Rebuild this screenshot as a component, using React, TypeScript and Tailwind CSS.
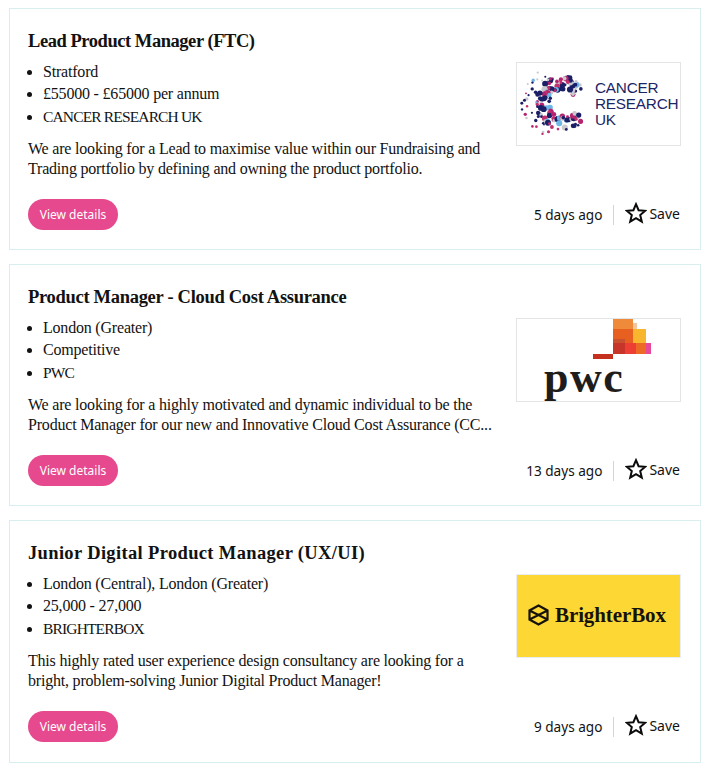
import React from "react";

const serif = "font-['Liberation_Serif',serif]";
const sans = "font-['Noto_Sans',sans-serif]";

function CrukLogo() {
  const colors = ["#1b1f66", "#b5246e", "#1b1f66", "#c2306f", "#1b1f66", "#c9c9cf", "#b5246e", "#6fb7e6"];
  const dots: { x: number; y: number; r: number; c: string }[] = [];
  const hash = (v: number) => {
    const s = Math.sin(v * 12.9898) * 43758.5453;
    return s - Math.floor(s);
  };
  for (let i = 0; i < 120; i++) {
    const a = (36 + ((i + hash(i + 0.1)) / 120) * 288) * (Math.PI / 180);
    const rad = 13 + hash(i + 0.3) * 14;
    dots.push({
      x: 46 + Math.cos(a) * rad,
      y: 40 - Math.sin(a) * rad,
      r: 1.3 + hash(i + 0.5) * 1.8,
      c: colors[Math.floor(hash(i + 0.7) * colors.length)],
    });
  }
  for (let i = 0; i < 30; i++) {
    const a = (115 + ((i + hash(i + 1.1)) / 30) * 130) * (Math.PI / 180);
    const rad = 27 + hash(i + 1.3) * 15;
    dots.push({
      x: 46 + Math.cos(a) * rad,
      y: 40 - Math.sin(a) * rad,
      r: 0.9 + hash(i + 1.5) * 0.9,
      c: colors[Math.floor(hash(i + 1.7) * colors.length)],
    });
  }
  return (
    <div className="relative h-[84px] w-[165px] border border-[#e3e5e6] bg-white">
      <svg className="absolute left-0 top-0" width="78" height="82" viewBox="0 0 78 82">
        {dots.map((d, i) => (
          <circle key={i} cx={d.x} cy={d.y} r={d.r} fill={d.c} />
        ))}
      </svg>
      <div className="absolute left-[78px] top-[17px] font-['Liberation_Sans',sans-serif] text-[15.3px] leading-[16px] tracking-[-0.2px] text-[#1c2566]">
        <div>CANCER</div>
        <div>RESEARCH</div>
        <div>UK</div>
      </div>
    </div>
  );
}

function PwcLogo() {
  return (
    <div className="relative h-[84px] w-[165px] border border-[#e3e5e6] bg-white">
      <svg className="absolute left-0 top-0" width="163" height="50" viewBox="0 0 163 50">
        <rect x="96" y="0" width="20" height="10" fill="#ee8a3a" />
        <rect x="96" y="10" width="20" height="14" fill="#e8601f" />
        <rect x="116" y="4" width="4" height="6" fill="#f3c4a0" />
        <rect x="116" y="10" width="13" height="25" fill="#f8b52e" />
        <rect x="96" y="20" width="12" height="5" fill="#c9502f" />
        <rect x="96" y="24" width="12" height="11" fill="#c7352a" />
        <rect x="108" y="24" width="11" height="11" fill="#ee3f34" />
        <rect x="119" y="24" width="10" height="11" fill="#ec6a25" />
        <rect x="129" y="24" width="5" height="11" fill="#e8489a" />
        <rect x="76" y="35" width="20" height="5" fill="#c5301f" />
      </svg>
      <div className="absolute left-[27px] top-[36px] font-['Liberation_Serif',serif] text-[44px] font-bold leading-[46px] tracking-[1.5px] text-[#1f1d1c]">
        pwc
      </div>
    </div>
  );
}

function BrighterLogo() {
  return (
    <div className="flex h-[84px] w-[165px] items-center gap-[6px] border border-[#e9edf0] bg-[#fdd835] pb-[2px] pl-[11px]">
      <svg width="21" height="22" viewBox="0 0 21 22" fill="none" stroke="#16130c" strokeWidth="2.2">
        <path d="M10.5 1.5 19.5 6.5V15.5L10.5 20.5 1.5 15.5V6.5Z M1.5 6.5 19.5 15.5 M19.5 6.5 1.5 15.5" />
      </svg>
      <span className="font-['Liberation_Serif',serif] text-[21px] font-bold leading-none tracking-[-0.1px] text-[#16130c]">
        BrighterBox
      </span>
    </div>
  );
}

function Star() {
  return (
    <svg className="mb-[4px]" width="22" height="22" viewBox="0 0 22 22" fill="none" stroke="#0b0b0b" strokeWidth="2" strokeLinejoin="miter">
      <path d="M11 2.2 13.6 8.2 20.2 8.8 15.2 13.1 16.8 19.6 11 16.2 5.2 19.6 6.8 13.1 1.8 8.8 8.4 8.2Z" />
    </svg>
  );
}

type Job = {
  title: string;
  titleClass: string;
  items: string[];
  capsItem: string;
  desc: string[];
  ago: string;
  logo: React.ReactNode;
  h: string;
};

const jobs: Job[] = [
  {
    title: "Lead Product Manager (FTC)",
    titleClass: "tracking-[-0.45px]",
    items: ["Stratford", "£55000 - £65000 per annum"],
    capsItem: "CANCER RESEARCH UK",
    desc: [
      "We are looking for a Lead to maximise value within our Fundraising and",
      "Trading portfolio by defining and owning the product portfolio.",
    ],
    ago: "5 days ago",
    logo: <CrukLogo />,
    h: "h-[242px]",
  },
  {
    title: "Product Manager - Cloud Cost Assurance",
    titleClass: "tracking-[-0.3px]",
    items: ["London (Greater)", "Competitive"],
    capsItem: "PWC",
    desc: [
      "We are looking for a highly motivated and dynamic individual to be the",
      "Product Manager for our new and Innovative Cloud Cost Assurance (CC...",
    ],
    ago: "13 days ago",
    logo: <PwcLogo />,
    h: "h-[242px]",
  },
  {
    title: "Junior Digital Product Manager (UX/UI)",
    titleClass: "tracking-[0.35px]",
    items: ["London (Central), London (Greater)", "25,000 - 27,000"],
    capsItem: "BRIGHTERBOX",
    desc: [
      "This highly rated user experience design consultancy are looking for a",
      "bright, problem-solving Junior Digital Product Manager!",
    ],
    ago: "9 days ago",
    logo: <BrighterLogo />,
    h: "h-[243px]",
  },
];

function Card({ job }: { job: Job }) {
  return (
    <div className={`${job.h} flex flex-col border border-[#d9eeee] bg-white pl-[18px] pr-[19px] pt-[22px]`}>
      <h2 className={`${serif} ${job.titleClass} text-[18.5px] font-bold leading-[20px] text-[#121212]`}>{job.title}</h2>
      <div className="flex">
        <div className="w-[488px] shrink-0">
          <ul className={`${serif} mt-[10px] list-disc pl-[15px] text-[16px] leading-[22.4px] tracking-[-0.2px] text-[#121212]`}>
            {job.items.map((t) => (
              <li key={t}>{t}</li>
            ))}
            <li>
              <span className="text-[15.5px] tracking-[-0.85px]">{job.capsItem}</span>
            </li>
          </ul>
          <div className={`${serif} mt-[11px] text-[16px] leading-[20px] tracking-[-0.2px] text-[#121212]`}>
            {job.desc.map((t) => (
              <div key={t} className="whitespace-nowrap">{t}</div>
            ))}
          </div>
        </div>
        <div className="mt-[11px] shrink-0">{job.logo}</div>
      </div>
      <div className="mt-[20px] flex items-center justify-between">
        <div className={`${sans} flex h-[31px] w-[90px] items-center justify-center rounded-full bg-[#e6498e] text-[12px] text-white`}>
          View details
        </div>
        <div className={`${sans} flex items-center pr-[1px] text-[13.6px] text-[#121212]`}>
          <span>{job.ago}</span>
          <span className="ml-[11px] mr-[11px] h-[20px] w-px bg-[#d5d5d5]"></span>
          <span className="flex items-center gap-[2px]">
            <Star />
            <span className="pb-[3px] text-[14px]">Save</span>
          </span>
        </div>
      </div>
    </div>
  );
}

export default function App() {
  return (
    <div className="flex h-[768px] w-[710px] flex-col gap-[14px] overflow-hidden bg-white pl-[9px] pr-[9px] pt-[8px]">
      {jobs.map((j) => (
        <Card key={j.title} job={j} />
      ))}
    </div>
  );
}
